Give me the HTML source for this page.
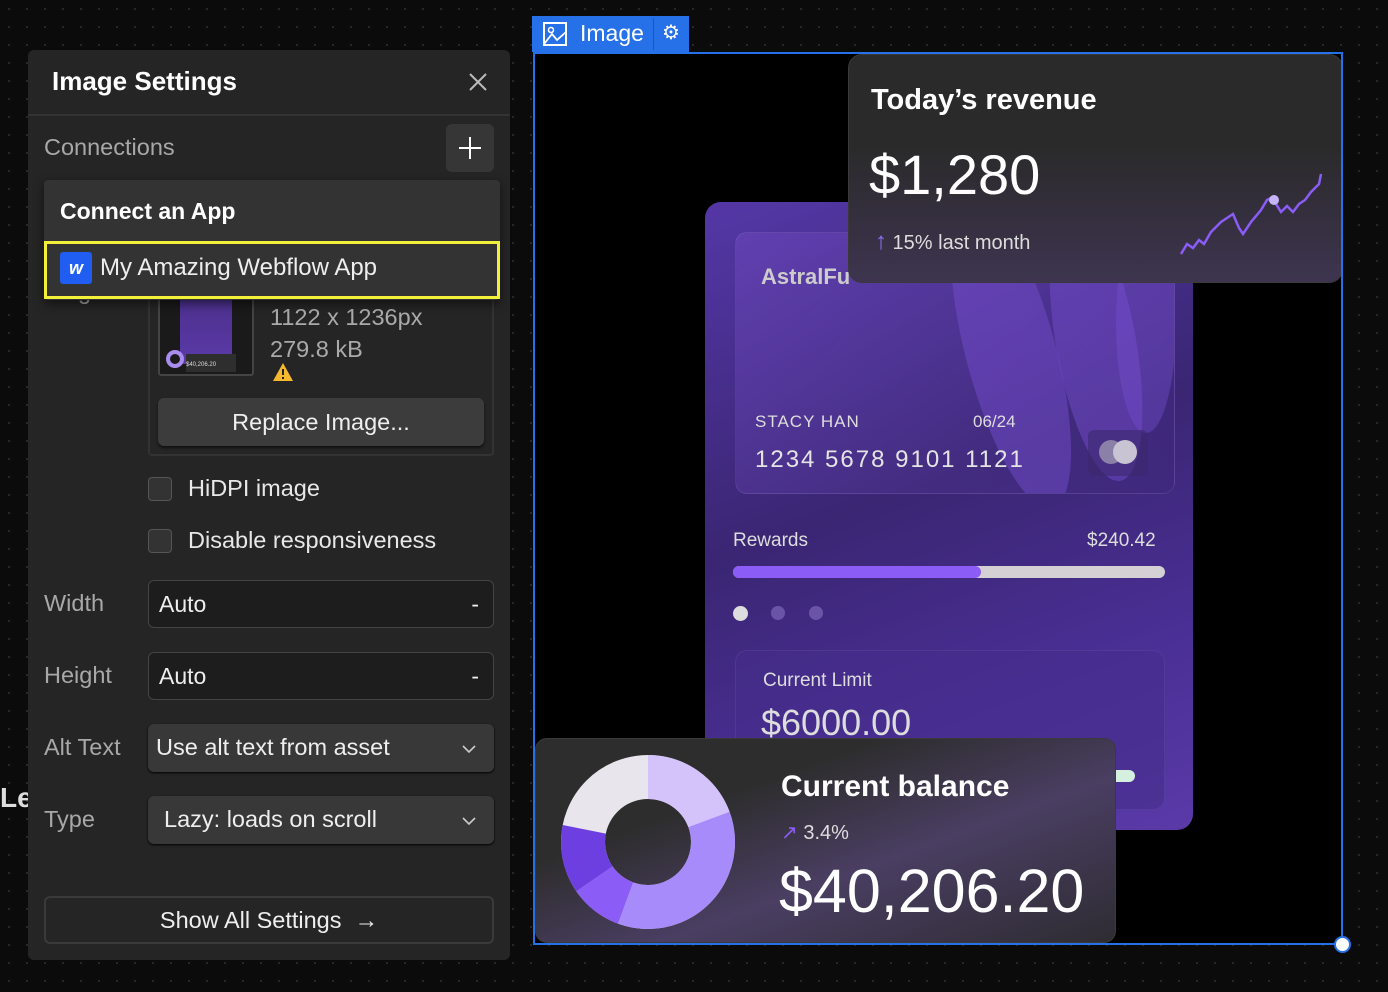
<!DOCTYPE html>
<html><head><meta charset="utf-8"><style>
*{box-sizing:border-box;margin:0;padding:0}
body{width:1388px;height:992px;overflow:hidden;background:#0b0b0b;font-family:"Liberation Sans",sans-serif;position:relative;
background-image:radial-gradient(circle,#2a2a2a 1px,transparent 1.2px);background-size:18px 18px}
.abs{position:absolute}
.panel{left:28px;top:50px;width:482px;height:910px;background:#252525;border-radius:6px}
.t{position:absolute;color:#e8e8e8;white-space:nowrap}
.lbl{color:#a8a8a8;font-size:23.5px}
.inp{position:absolute;width:346px;height:48px;border:1px solid #444;border-radius:6px;background:#1d1d1d;color:#eee;font-size:23px;padding:10px 10px}
.sel{position:absolute;width:346px;height:48px;border-radius:6px;background:#383838;color:#eee;font-size:23.5px;padding:10px 8px;box-shadow:0 1px 2px #000}
.cb{position:absolute;left:120px;width:24px;height:24px;border:1px solid #555;border-radius:4px;background:#333}
</style></head><body>
<div class="t" style="left:0;top:782px;font-size:28px;font-weight:bold;color:#ddd">Le</div>
<div class="abs panel">
 <div class="t" style="left:24px;top:16px;font-size:26px;font-weight:bold;color:#fff">Image Settings</div>
 <svg class="abs" style="left:440px;top:22px" width="20" height="20"><path d="M2 2L18 18M18 2L2 18" stroke="#bbb" stroke-width="2"/></svg>
 <div class="abs" style="left:0;top:64px;width:482px;height:2px;background:#333"></div>
 <div class="t lbl" style="left:16px;top:84px">Connections</div>
 <div class="abs" style="left:418px;top:74px;width:48px;height:48px;background:#363636;border-radius:6px"></div>
 <svg class="abs" style="left:430px;top:86px" width="24" height="24"><path d="M12 1V23M1 12H23" stroke="#fff" stroke-width="2"/></svg>
 <div class="t lbl" style="left:50px;top:228px">g</div>
 <div class="abs" style="left:120px;top:240px;width:346px;height:166px;border:2px solid #333;border-radius:4px"></div>
 <div class="abs" style="left:130px;top:240px;width:96px;height:86px;border:2px solid #444;border-radius:3px;background:#1a1a1a;overflow:hidden">
  <div class="abs" style="left:20px;top:0;width:52px;height:72px;background:linear-gradient(#4a2f8a,#5b3aa8)"></div>
  <div class="abs" style="left:6px;top:58px;width:18px;height:18px;border-radius:50%;border:4px solid #a98cf0"></div>
  <div class="abs" style="left:26px;top:62px;width:50px;height:18px;background:#2e2e2e;font-size:6px;color:#ddd;padding-top:8px">$40,206.20</div>
 </div>
 <div class="t" style="left:242px;top:254px;font-size:23.5px;color:#aaa">1122 x 1236px</div>
 <div class="t" style="left:242px;top:286px;font-size:23.5px;color:#aaa">279.8 kB</div>
 <svg class="abs" style="left:244px;top:312px" width="22" height="20"><path d="M11 1L21 19H1Z" fill="#f5b82e"/><path d="M11 7V13M11 15V17" stroke="#222" stroke-width="2"/></svg>
 <div class="abs" style="left:130px;top:348px;width:326px;height:48px;background:#3c3c3c;border-radius:6px;box-shadow:0 2px 2px #111;color:#eee;font-size:23.5px;text-align:center;line-height:48px">Replace Image...</div>
 <div class="cb" style="top:427px"></div>
 <div class="t" style="left:160px;top:425px;font-size:23.5px">HiDPI image</div>
 <div class="cb" style="top:479px"></div>
 <div class="t" style="left:160px;top:477px;font-size:23.5px">Disable responsiveness</div>
 <div class="t lbl" style="left:16px;top:540px">Width</div>
 <div class="inp" style="left:120px;top:530px">Auto<span style="float:right;margin-right:4px">-</span></div>
 <div class="t lbl" style="left:16px;top:612px">Height</div>
 <div class="inp" style="left:120px;top:602px">Auto<span style="float:right;margin-right:4px">-</span></div>
 <div class="t lbl" style="left:16px;top:684px">Alt Text</div>
 <div class="sel" style="left:120px;top:674px">Use alt text from asset</div>
 <svg class="abs" style="left:434px;top:694px" width="14" height="10"><path d="M1 2L7 8L13 2" stroke="#ccc" stroke-width="1.6" fill="none"/></svg>
 <div class="t lbl" style="left:16px;top:756px">Type</div>
 <div class="sel" style="left:120px;top:746px;padding-left:16px">Lazy: loads on scroll</div>
 <svg class="abs" style="left:434px;top:766px" width="14" height="10"><path d="M1 2L7 8L13 2" stroke="#ccc" stroke-width="1.6" fill="none"/></svg>
 <div class="abs" style="left:16px;top:846px;width:450px;height:48px;border:2px solid #3a3a3a;border-radius:6px;color:#eee;font-size:23.5px;text-align:center;line-height:44px">Show All Settings &nbsp;→</div>
</div>
<!-- dropdown -->
<div class="abs" style="left:44px;top:180px;width:456px;height:120px;background:#333;border-radius:4px;box-shadow:0 4px 10px rgba(0,0,0,.5)">
 <div class="t" style="left:16px;top:18px;font-size:23px;font-weight:bold;color:#fff">Connect an App</div>
</div>
<div class="abs" style="left:44px;top:241px;width:456px;height:58px;border:3px solid #f3f03a;background:#333"></div>
<div class="abs" style="left:60px;top:252px;width:32px;height:32px;background:#1f5ef0;border-radius:3px;color:#fff;font-weight:bold;font-style:italic;font-size:18px;text-align:center;line-height:32px">w</div>
<div class="t" style="left:100px;top:254px;font-size:24px;color:#eee">My Amazing Webflow App</div>
<!-- canvas image -->
<div class="abs" style="left:533px;top:52px;width:810px;height:893px;background:#000;overflow:hidden">
 <div class="abs" style="left:172px;top:150px;width:488px;height:628px;border-radius:16px;background:linear-gradient(160deg,#5437a6,#3a2673 45%,#4a2f95 75%,#5a3aa8)"></div>
 <div class="abs" style="left:202px;top:180px;width:440px;height:262px;border-radius:12px;border:1px solid rgba(255,255,255,.08);background:linear-gradient(135deg,rgba(120,80,200,.4),rgba(60,40,120,.3));overflow:hidden">
  <div class="abs" style="left:230px;top:-40px;width:90px;height:320px;border-radius:50%;background:rgba(120,80,210,.45);transform:rotate(-15deg)"></div>
  <div class="abs" style="left:320px;top:-30px;width:80px;height:280px;border-radius:50%;background:rgba(120,80,210,.45);transform:rotate(-10deg)"></div>
  <div class="abs" style="left:380px;top:-20px;width:60px;height:220px;border-radius:50%;background:rgba(120,80,210,.4)"></div>
 </div>
 <div class="t" style="left:228px;top:212px;font-size:22px;font-weight:bold;color:#ccc">AstralFu</div>
 <div class="t" style="left:222px;top:360px;font-size:17px;color:#ddd;letter-spacing:1px">STACY HAN</div>
 <div class="t" style="left:440px;top:360px;font-size:17px;color:#ddd">06/24</div>
 <div class="t" style="left:222px;top:394px;font-size:24px;color:#e4e4e4;letter-spacing:2px">1234 5678 9101 1121</div>
 <div class="abs" style="left:555px;top:378px;width:60px;height:46px;background:rgba(60,40,110,.6);border-radius:6px"></div>
 <div class="abs" style="left:566px;top:388px;width:24px;height:24px;border-radius:50%;background:#8a80a8"></div>
 <div class="abs" style="left:580px;top:388px;width:24px;height:24px;border-radius:50%;background:#c8c4d4"></div>
 <div class="t" style="left:200px;top:478px;font-size:19px;color:#ddd">Rewards</div>
 <div class="t" style="left:554px;top:478px;font-size:19px;color:#ddd">$240.42</div>
 <div class="abs" style="left:200px;top:514px;width:432px;height:12px;border-radius:6px;background:#d4d0d4"></div>
 <div class="abs" style="left:200px;top:514px;width:248px;height:12px;border-radius:6px;background:#8b5cf6"></div>
 <div class="abs" style="left:200px;top:554px;width:15px;height:15px;border-radius:50%;background:#ddd"></div>
 <div class="abs" style="left:238px;top:554px;width:14px;height:14px;border-radius:50%;background:#6a54a8"></div>
 <div class="abs" style="left:276px;top:554px;width:14px;height:14px;border-radius:50%;background:#6a54a8"></div>
 <div class="abs" style="left:202px;top:598px;width:430px;height:160px;border-radius:12px;border:1px solid rgba(255,255,255,.06);background:rgba(70,45,140,.6)"></div>
 <div class="t" style="left:230px;top:618px;font-size:19px;color:#ddd">Current Limit</div>
 <div class="t" style="left:228px;top:650px;font-size:36px;color:#ddd">$6000.00</div>
 <div class="abs" style="left:570px;top:718px;width:32px;height:12px;border-radius:6px;background:#d6f0e0"></div>
 <!-- revenue -->
 <div class="abs" style="left:315px;top:2px;width:495px;height:229px;border-radius:14px;background:linear-gradient(180deg,#2a2a2a 40%,#3e3450);border:1px solid #3a3a3a"></div>
 <div class="t" style="left:338px;top:32px;font-size:29px;font-weight:bold;color:#fff">Today’s revenue</div>
 <div class="t" style="left:336px;top:90px;font-size:56px;color:#fff">$1,280</div>
 <div class="t" style="left:342px;top:176px;font-size:20px;color:#ddd"><span style="color:#8b6cf6;font-size:24px">↑</span> 15% last month</div>
 <svg class="abs" style="left:640px;top:120px" width="160" height="90"><path d="M8 82L14 72L20 76L26 68L31 72L38 60L48 50L54 46L60 42L66 56L70 62L78 50L88 38L94 28L98 26L103 32L108 40L114 34L120 40L126 32L132 28L138 20L146 12L148 2" stroke="#8b5cf6" stroke-width="2.5" fill="none"/><circle cx="101" cy="28" r="5" fill="#c6b4fa"/></svg>
 <!-- balance -->
 <div class="abs" style="left:2px;top:686px;width:581px;height:205px;border-radius:12px;background:linear-gradient(160deg,#2d2d2d 30%,#4a3e62 60%,#2e2c32);border:1px solid #3a3a3a"></div>
 <svg class="abs" style="left:27px;top:702px" width="176" height="176" viewBox="-88 -88 176 176">
  <circle r="65" fill="none" stroke="#e8e6ec" stroke-width="44"/>
  <circle r="65" fill="none" stroke="#d4c2fb" stroke-width="44" stroke-dasharray="79 409" transform="rotate(-90)"/>
  <circle r="65" fill="none" stroke="#a78bfa" stroke-width="44" stroke-dasharray="0 79 148 409" transform="rotate(-90)"/>
  <circle r="65" fill="none" stroke="#8b5cf6" stroke-width="44" stroke-dasharray="0 227 40 409" transform="rotate(-90)"/>
  <circle r="65" fill="none" stroke="#6d3fe0" stroke-width="44" stroke-dasharray="0 267 52 409" transform="rotate(-90)"/>
 </svg>
 <div class="t" style="left:248px;top:718px;font-size:30px;font-weight:bold;color:#fff">Current balance</div>
 <div class="t" style="left:248px;top:768px;font-size:20px;color:#ddd"><span style="color:#8b5cf6">↗</span> 3.4%</div>
 <div class="t" style="left:246px;top:804px;font-size:61px;color:#fff">$40,206.20</div>
</div>
<div class="abs" style="left:533px;top:52px;width:810px;height:893px;border:2px solid #2670e8"></div>
<div class="abs" style="left:1334px;top:936px;width:17px;height:17px;border-radius:50%;background:#fff;border:2px solid #2670e8"></div>
<div class="abs" style="left:532px;top:16px;width:157px;height:36px;background:#2670e8"></div>
<div class="abs" style="left:653px;top:18px;width:1px;height:32px;background:#1d55b8"></div>
<svg class="abs" style="left:543px;top:22px" width="24" height="24"><rect x="1" y="1" width="22" height="22" fill="none" stroke="#fff" stroke-width="2"/><circle cx="8" cy="8" r="2.5" fill="none" stroke="#fff" stroke-width="1.6"/><path d="M1 22L9 12L14 18L23 10" stroke="#fff" stroke-width="1.8" fill="none"/></svg>
<div class="t" style="left:580px;top:20px;font-size:23px;color:#fff">Image</div>
<div class="t" style="left:662px;top:20px;font-size:20px;color:#fff">⚙</div>
</body></html>
